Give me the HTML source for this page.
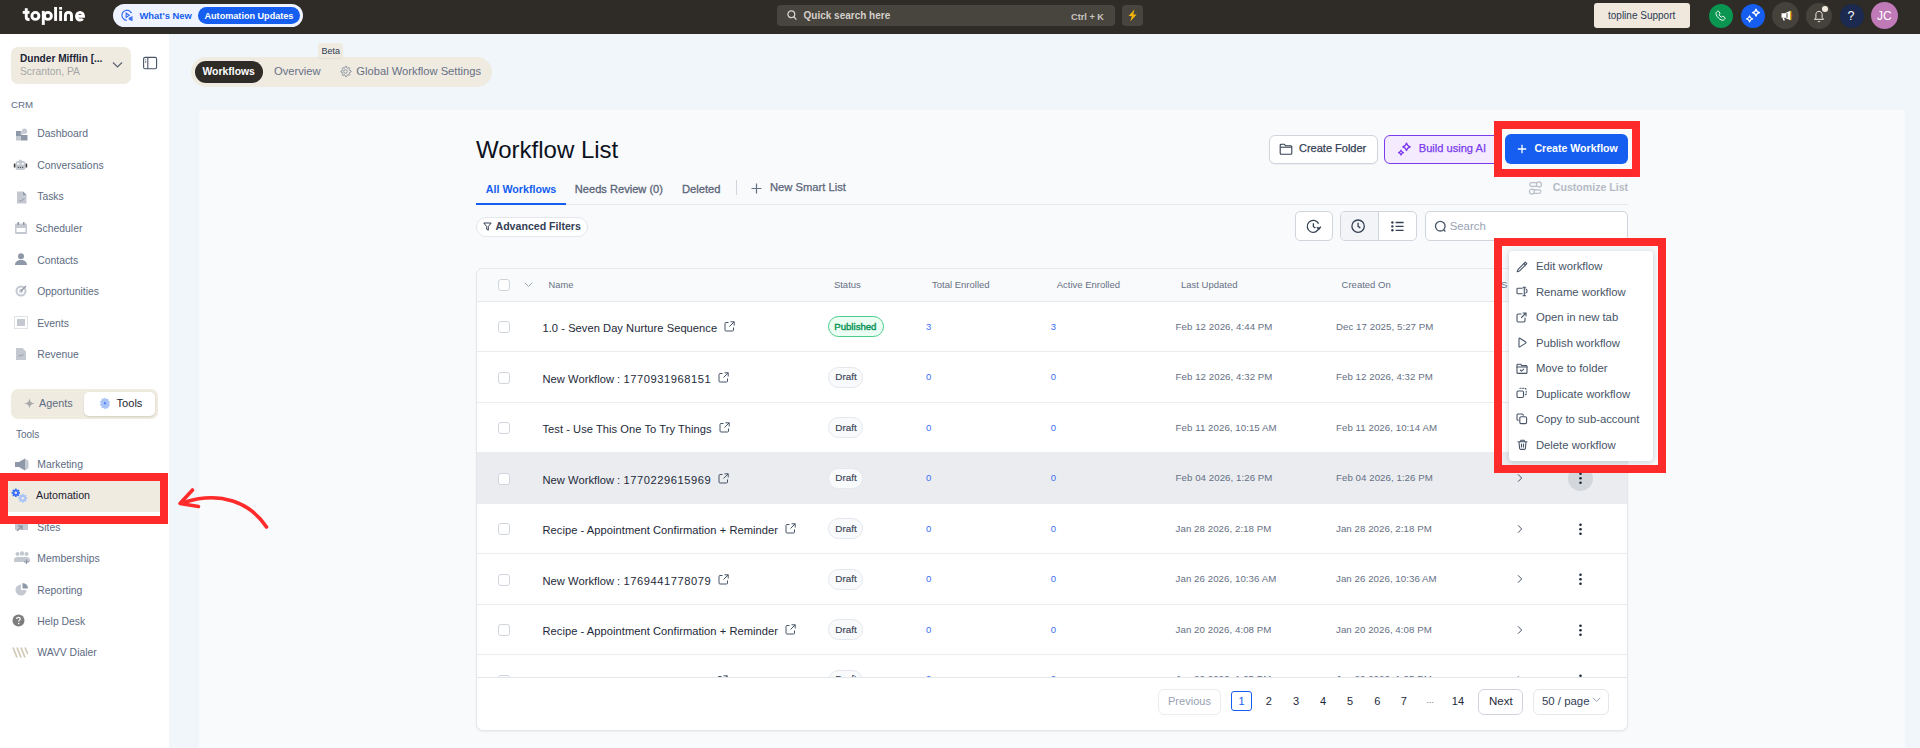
<!DOCTYPE html>
<html><head><meta charset="utf-8">
<style>
*{box-sizing:border-box;margin:0;padding:0}
html,body{width:1920px;height:748px;overflow:hidden;font-family:"Liberation Sans",sans-serif;background:#f0f6fa;position:relative}
.a{position:absolute;white-space:nowrap}
</style></head><body>
<div class="a" style="left:0px;top:0px;width:1920px;height:34px;background:#2f2b26"></div>
<div class="a" style="left:0px;top:34px;width:169px;height:714px;background:#fff"></div>
<div class="a" style="left:199px;top:110px;width:1706px;height:638px;background:#f8fafc"></div>
<svg class="a" style="left:20px;top:4px;" width="70" height="24" viewBox="0 0 70 24" fill="none"><g stroke="#fff" stroke-width="2.9" stroke-linecap="butt">
<path d="M6.25 4.2V13c0 1.6.9 2.45 2.4 2.45h.9"/><path d="M2.7 8.35h6.8"/>
<circle cx="15.4" cy="11.9" r="3.5"/>
<path d="M23.3 6.9v14"/><circle cx="27.9" cy="11.9" r="3.5"/>
<path d="M35.6 3v13.9"/><path d="M40.6 6.9v10"/>
<path d="M45.4 16.9v-5.4c0-1.9 1.4-3.15 3.05-3.15s3.05 1.25 3.05 3.15v5.4"/>
<path d="M56.5 12.2h7c0-2.1-1.5-3.85-3.5-3.85s-3.5 1.75-3.5 3.85 1.5 3.85 3.5 3.85c1.1 0 2.1-.45 2.75-1.2"/>
</g><rect x="39.15" y="3" width="2.9" height="2.6" fill="#fff"/></svg>
<div class="a" style="left:113px;top:4px;width:190px;height:23px;background:#eef3ff;border-radius:12px"></div>
<div class="a" style="left:198px;top:7px;width:101.5px;height:17px;background:#155eef;border-radius:9px"></div>
<svg class="a" style="left:121px;top:9px;" width="13" height="13" viewBox="0 0 13 13" fill="none"><g stroke="#3a6ff7" stroke-width="1.2" fill="none"><path d="M10.5 4.2A5 5 0 1 0 5.8 11.3" stroke-dasharray="2.2 0"/><path d="M5.2 4.2v4.2l3-2.1z"/><path d="M8.3 9.2l2.6-1.2v3.2l-2.6-1.2z" fill="#3a6ff7"/></g></svg>
<div class="a " style="left:139.5px;top:10.00px;font-size:9.4px;line-height:12px;color:#155eef;font-weight:700;">What's New</div>
<div class="a " style="left:204.5px;top:10.00px;font-size:9.1px;line-height:12px;color:#fff;font-weight:700;">Automation Updates</div>
<div class="a" style="left:777px;top:5px;width:338px;height:21px;background:#48443e;border-radius:4px"></div>
<svg class="a" style="left:787px;top:10px;" width="10" height="11" viewBox="0 0 10 11" fill="none"><circle cx="4.3" cy="4.3" r="3.4" stroke="#d6d3ce" stroke-width="1.3"/><path d="M6.8 6.8l2.6 2.8" stroke="#d6d3ce" stroke-width="1.3"/></svg>
<div class="a " style="left:803.5px;top:9.00px;font-size:10px;line-height:13px;color:#d4d0ca;font-weight:700;">Quick search here</div>
<div class="a " style="left:1071px;top:11.00px;font-size:9.2px;line-height:12px;color:#c9c5bf;font-weight:700;">Ctrl + K</div>
<div class="a" style="left:1122px;top:5px;width:21px;height:21px;background:#48443e;border-radius:4px"></div>
<svg class="a" style="left:1127px;top:9px;" width="11" height="13" viewBox="0 0 11 13" fill="none"><path d="M7.5 0.5L1.5 7h3.3L3.3 12.5 9.6 5.6H6.3z" fill="#f5b70a"/></svg>
<div class="a" style="left:1594px;top:3px;width:96px;height:25px;background:#f0e8dc;border-radius:3px"></div>
<div class="a " style="left:1608px;top:9.00px;font-size:10px;line-height:13px;color:#2c3a55;font-weight:400;">topline Support</div>
<div class="a" style="left:1709.0px;top:3.5px;width:24px;height:24px;background:#0a9551;border-radius:50%"></div>
<svg class="a" style="left:1715px;top:10px;" width="12" height="12" viewBox="0 0 12 12" fill="none"><path d="M2.6 1.2c.35-.25.8-.2 1.05.1l1.2 1.65c.25.35.2.75-.1 1l-.75.65c.5 1.15 1.4 2.1 2.55 2.65l.65-.75c.25-.3.7-.35 1-.1l1.65 1.2c.35.25.35.75.1 1.05l-.85.95C8.6 10.4 7.4 10.5 6.1 9.85 4 8.75 2.4 7.2 1.4 5.1.8 3.9.9 2.7 1.6 2z" stroke="#fff" stroke-width="1"/></svg>
<div class="a" style="left:1741.0px;top:3.5px;width:24px;height:24px;background:#155eef;border-radius:50%"></div>
<svg class="a" style="left:1744px;top:7px;" width="18" height="18" viewBox="0 0 18 18" fill="none"><g fill="none" stroke="#fff" stroke-width="1.3" stroke-linejoin="round"><path d="M12 2.2c.4 2.2 1.3 3.1 3.5 3.5-2.2.4-3.1 1.3-3.5 3.5-.4-2.2-1.3-3.1-3.5-3.5 2.2-.4 3.1-1.3 3.5-3.5z"/><path d="M5.6 8.8c.35 1.9 1.1 2.65 3 3-1.9.35-2.65 1.1-3 3-.35-1.9-1.1-2.65-3-3 1.9-.35 2.65-1.1 3-3z"/></g></svg>
<div class="a" style="left:1772.0px;top:2.0px;width:27px;height:27px;background:#45413b;border-radius:50%"></div>
<svg class="a" style="left:1780px;top:10px;" width="13" height="11" viewBox="0 0 13 11" fill="none"><path d="M1.5 3.2h3.3L10.5 0.8v9.4L4.8 7.8H1.5z" fill="#fff"/><path d="M2.5 7.8l.8 2.6h1.6l-.8-2.6z" fill="#fff"/><path d="M10.8 1v9" stroke="#f5b70a" stroke-width="1.2"/><path d="M11.8 4.3v2.4" stroke="#e0453a" stroke-width="1"/><path d="M7 3.2v4.6" stroke="#45413b" stroke-width="1"/></svg>
<div class="a" style="left:1806.0px;top:2.5px;width:26px;height:26px;background:#45413b;border-radius:50%"></div>
<svg class="a" style="left:1813px;top:9.5px;" width="12" height="13" viewBox="0 0 12 13" fill="none"><path d="M6 1.3c-1.9 0-3.1 1.5-3.1 3.3v2.9L1.5 9.3h9L9.1 7.5V4.6C9.1 2.8 7.9 1.3 6 1.3z" stroke="#f2efe9" stroke-width="1"/><path d="M4.9 11a1.15 1.15 0 0 0 2.2 0" stroke="#f2efe9" stroke-width="1"/></svg>
<div class="a" style="left:1822.25px;top:6.25px;width:5.5px;height:5.5px;background:#f0e8dc;border-radius:50%"></div>
<div class="a" style="left:1840.0px;top:3.5px;width:24px;height:24px;background:#1b2a4e;border-radius:50%"></div>
<div class="a " style="left:1847.5px;top:8.00px;font-size:12.5px;line-height:16px;color:#fff;font-weight:400;">?</div>
<div class="a" style="left:1871.0px;top:2.0px;width:27px;height:27px;background:#c07ab8;border-radius:50%"></div>
<div class="a " style="left:1877px;top:8.00px;font-size:12px;line-height:16px;color:#fff;font-weight:400;">JC</div>
<div class="a" style="left:11px;top:47px;width:120px;height:37px;background:#f0ebe0;border-radius:7px"></div>
<div class="a " style="left:20px;top:52.30px;font-size:10.1px;line-height:13px;color:#1a2338;font-weight:700;">Dunder Mifflin [...</div>
<div class="a " style="left:20px;top:65.00px;font-size:10.3px;line-height:13px;color:#a6a6a6;font-weight:400;">Scranton, PA</div>
<svg class="a" style="left:112px;top:61px;" width="11" height="8" viewBox="0 0 11 8" fill="none"><path d="M1 1.5l4.5 4.5L10 1.5" stroke="#556070" stroke-width="1.1"/></svg>
<svg class="a" style="left:142px;top:56px;" width="16" height="14" viewBox="0 0 16 14" fill="none"><rect x="1.6" y="1.4" width="13" height="11.4" rx="1.5" stroke="#4a5468" stroke-width="1.1"/><path d="M5.8 1.4v11.4" stroke="#4a5468" stroke-width="1.1"/><path d="M3.7 3.3v1M3.7 5.2v1.6" stroke="#4a5468" stroke-width="0.9"/></svg>
<div class="a " style="left:11px;top:98.00px;font-size:9.7px;line-height:13px;color:#5d6b82;font-weight:400;">CRM</div>
<div class="a " style="left:37.2px;top:127.00px;font-size:10.4px;line-height:14px;color:#5d6b82;font-weight:400;">Dashboard</div>
<div class="a " style="left:37.2px;top:159.00px;font-size:10.4px;line-height:14px;color:#5d6b82;font-weight:400;">Conversations</div>
<div class="a " style="left:37.2px;top:190.00px;font-size:10.4px;line-height:14px;color:#5d6b82;font-weight:400;">Tasks</div>
<div class="a " style="left:35.6px;top:222.00px;font-size:10.4px;line-height:14px;color:#5d6b82;font-weight:400;">Scheduler</div>
<div class="a " style="left:37.2px;top:254.00px;font-size:10.4px;line-height:14px;color:#5d6b82;font-weight:400;">Contacts</div>
<div class="a " style="left:37.2px;top:285.00px;font-size:10.4px;line-height:14px;color:#5d6b82;font-weight:400;">Opportunities</div>
<div class="a " style="left:37.2px;top:317.00px;font-size:10.4px;line-height:14px;color:#5d6b82;font-weight:400;">Events</div>
<div class="a " style="left:37.2px;top:348.00px;font-size:10.4px;line-height:14px;color:#5d6b82;font-weight:400;">Revenue</div>
<svg class="a" style="left:15px;top:128px;" width="13" height="13" viewBox="0 0 13 13" fill="none"><rect x="1" y="3" width="5.5" height="5" fill="#8f98a8"/><circle cx="9.5" cy="3.2" r="2.6" fill="#c3c8d1"/><rect x="1" y="8" width="5" height="4.5" fill="#c3c8d1"/><path d="M6 7h6.5v5.5H6z" fill="#8f98a8"/><circle cx="6.5" cy="5.5" r="1.3" fill="#c3c8d1"/></svg>
<svg class="a" style="left:13px;top:159px;" width="15" height="12" viewBox="0 0 15 12" fill="none"><rect x="2.5" y="2" width="10" height="9" rx="2.5" fill="#c3c8d1"/><rect x="6" y="0.8" width="3" height="1.5" fill="#c3c8d1"/><rect x="4.3" y="4" width="2" height="1.6" fill="#fff"/><rect x="8.7" y="4" width="2" height="1.6" fill="#fff"/><rect x="0.8" y="4.5" width="1.6" height="4" rx=".6" fill="#3d3d3d"/><rect x="12.6" y="4.5" width="1.6" height="4" rx=".6" fill="#3d3d3d"/><path d="M4.8 8.3h1.2M6.9 8.3h1.2M9 8.3h1.2" stroke="#3d3d3d" stroke-width="1"/></svg>
<svg class="a" style="left:17px;top:191px;" width="10" height="13" viewBox="0 0 10 13" fill="none"><path d="M0 0.5h6L9.5 4v8.5H0z" fill="#c3c8d1"/><path d="M6 0.5V4h3.5z" fill="#8f98a8"/><path d="M2.3 9l1.6 1.6L7.2 7.3" stroke="#8f98a8" stroke-width="1"/></svg>
<svg class="a" style="left:15px;top:222px;" width="12" height="12" viewBox="0 0 12 12" fill="none"><rect x="0" y="1.5" width="12" height="10.5" rx="1" fill="#c3c8d1"/><rect x="1.5" y="6" width="9" height="4" fill="#fff"/><rect x="2.5" y="0" width="1.5" height="3" fill="#8f98a8"/><rect x="8" y="0" width="1.5" height="3" fill="#8f98a8"/></svg>
<svg class="a" style="left:15px;top:253px;" width="12" height="12" viewBox="0 0 12 12" fill="none"><circle cx="6" cy="3.3" r="3" fill="#8f98a8"/><path d="M0 12c0-3.3 2.7-5 6-5s6 1.7 6 5z" fill="#8f98a8"/></svg>
<svg class="a" style="left:15px;top:285px;" width="12" height="12" viewBox="0 0 12 12" fill="none"><circle cx="6" cy="6" r="5.5" fill="#c3c8d1"/><circle cx="6" cy="6" r="3.5" fill="#fff"/><circle cx="6" cy="6" r="2" fill="#c3c8d1"/><path d="M6 6l5-5" stroke="#8f98a8" stroke-width="1.3"/></svg>
<svg class="a" style="left:14px;top:316px;" width="14" height="13" viewBox="0 0 14 13" fill="none"><rect x="0.5" y="0.5" width="13" height="12" fill="none" stroke="#e0e3e8" stroke-width="1"/><rect x="3" y="3" width="8" height="7" fill="#c3c8d1"/></svg>
<svg class="a" style="left:16px;top:348px;" width="10" height="12" viewBox="0 0 10 12" fill="none"><path d="M0 0h6.5L10 3.5V12H0z" fill="#c3c8d1"/><path d="M2.5 8.5l1.5-1.5 1.5 1 2-2" stroke="#8f98a8" stroke-width="0.9"/></svg>
<div class="a" style="left:11px;top:389px;width:147px;height:30px;background:#f0ebe0;border-radius:7px"></div>
<div class="a" style="left:84px;top:392px;width:71px;height:24px;background:#fff;border-radius:5px;box-shadow:0 1px 2px rgba(0,0,0,.12)"></div>
<svg class="a" style="left:24px;top:398px;" width="11" height="11" viewBox="0 0 11 11" fill="none"><path d="M5.5 0C6 3.8 7.2 5 11 5.5 7.2 6 6 7.2 5.5 11 5 7.2 3.8 6 0 5.5 3.8 5 5 3.8 5.5 0z" fill="#a9a9a9"/></svg>
<div class="a " style="left:39px;top:396.00px;font-size:10.8px;line-height:14px;color:#5d6b82;font-weight:400;">Agents</div>
<svg class="a" style="left:99px;top:397px;" width="12" height="12" viewBox="0 0 12 12" fill="none"><path d="M6 0.5l1.2 1.6 2-.3.3 2 1.6 1.2-1 1.7 1 1.7-1.6 1.2-.3 2-2-.3L6 12.5 4.8 10.9l-2 .3-.3-2L.9 8l1-1.7-1-1.7 1.6-1.2.3-2 2 .3z" fill="#a9c3f7"/><circle cx="6" cy="6.2" r="1" fill="#3a6ff7"/></svg>
<div class="a " style="left:116.5px;top:396.00px;font-size:11.1px;line-height:14px;color:#1d2433;font-weight:400;">Tools</div>
<div class="a " style="left:16px;top:428.00px;font-size:10px;line-height:13px;color:#5d6b82;font-weight:400;">Tools</div>
<div class="a" style="left:0px;top:481px;width:160px;height:31px;background:#f0ebe0"></div>
<div class="a " style="left:37.3px;top:458.00px;font-size:10.4px;line-height:14px;color:#5d6b82;font-weight:400;">Marketing</div>
<div class="a " style="left:36px;top:488.00px;font-size:10.7px;line-height:14px;color:#1d2433;font-weight:400;">Automation</div>
<div class="a " style="left:37.3px;top:521.00px;font-size:10.4px;line-height:14px;color:#5d6b82;font-weight:400;">Sites</div>
<div class="a " style="left:37.3px;top:552.00px;font-size:10.4px;line-height:14px;color:#5d6b82;font-weight:400;">Memberships</div>
<div class="a " style="left:37.3px;top:584.00px;font-size:10.4px;line-height:14px;color:#5d6b82;font-weight:400;">Reporting</div>
<div class="a " style="left:37.3px;top:615.00px;font-size:10.4px;line-height:14px;color:#5d6b82;font-weight:400;">Help Desk</div>
<div class="a " style="left:37.3px;top:646.00px;font-size:10.4px;line-height:14px;color:#5d6b82;font-weight:400;">WAVV Dialer</div>
<svg class="a" style="left:15px;top:458px;" width="14" height="13" viewBox="0 0 14 13" fill="none"><path d="M0 4h4l6-3.5v12L4 9H0z" fill="#8f98a8"/><path d="M10 0.5L13.5 3v7L10 12.5z" fill="#c3c8d1"/></svg>
<svg class="a" style="left:11px;top:488px;" width="18" height="16" viewBox="0 0 18 16" fill="none"><g transform="translate(4.8 4.8)"><circle r="3.024" fill="#3a6ff7"/><rect x="-0.924" y="-4.2" width="1.848" height="2.1" fill="#3a6ff7" transform="rotate(0)"/><rect x="-0.924" y="-4.2" width="1.848" height="2.1" fill="#3a6ff7" transform="rotate(45)"/><rect x="-0.924" y="-4.2" width="1.848" height="2.1" fill="#3a6ff7" transform="rotate(90)"/><rect x="-0.924" y="-4.2" width="1.848" height="2.1" fill="#3a6ff7" transform="rotate(135)"/><rect x="-0.924" y="-4.2" width="1.848" height="2.1" fill="#3a6ff7" transform="rotate(180)"/><rect x="-0.924" y="-4.2" width="1.848" height="2.1" fill="#3a6ff7" transform="rotate(225)"/><rect x="-0.924" y="-4.2" width="1.848" height="2.1" fill="#3a6ff7" transform="rotate(270)"/><rect x="-0.924" y="-4.2" width="1.848" height="2.1" fill="#3a6ff7" transform="rotate(315)"/><circle r="1.26" fill="#f0ebe0"/></g><g transform="translate(11.8 10.2)"><circle r="3.168" fill="#a9c3f7"/><rect x="-0.9680000000000001" y="-4.4" width="1.9360000000000002" height="2.2" fill="#a9c3f7" transform="rotate(0)"/><rect x="-0.9680000000000001" y="-4.4" width="1.9360000000000002" height="2.2" fill="#a9c3f7" transform="rotate(45)"/><rect x="-0.9680000000000001" y="-4.4" width="1.9360000000000002" height="2.2" fill="#a9c3f7" transform="rotate(90)"/><rect x="-0.9680000000000001" y="-4.4" width="1.9360000000000002" height="2.2" fill="#a9c3f7" transform="rotate(135)"/><rect x="-0.9680000000000001" y="-4.4" width="1.9360000000000002" height="2.2" fill="#a9c3f7" transform="rotate(180)"/><rect x="-0.9680000000000001" y="-4.4" width="1.9360000000000002" height="2.2" fill="#a9c3f7" transform="rotate(225)"/><rect x="-0.9680000000000001" y="-4.4" width="1.9360000000000002" height="2.2" fill="#a9c3f7" transform="rotate(270)"/><rect x="-0.9680000000000001" y="-4.4" width="1.9360000000000002" height="2.2" fill="#a9c3f7" transform="rotate(315)"/><circle r="1.32" fill="#f0ebe0"/></g></svg>
<svg class="a" style="left:15px;top:520px;" width="13" height="12" viewBox="0 0 13 12" fill="none"><rect x="0" y="2" width="13" height="8" fill="#c3c8d1"/><path d="M2 11l5-5M3 6h4v4" stroke="#8f98a8" stroke-width="1.4"/></svg>
<svg class="a" style="left:14px;top:551px;" width="16" height="13" viewBox="0 0 16 13" fill="none"><circle cx="3.5" cy="3" r="2" fill="#c3c8d1"/><circle cx="8" cy="2.5" r="2.2" fill="#c3c8d1"/><circle cx="12.5" cy="3" r="2" fill="#c3c8d1"/><path d="M0 9c0-2 1.5-3 3.5-3h9c2 0 3.5 1 3.5 3v2H0z" fill="#c3c8d1"/><path d="M12.5 8.5v4.5M10.2 10.8h4.6" stroke="#8f98a8" stroke-width="1.2"/></svg>
<svg class="a" style="left:15px;top:583px;" width="13" height="13" viewBox="0 0 13 13" fill="none"><path d="M6 1.5A5.5 5.5 0 1 0 11.5 7H6z" fill="#c3c8d1"/><path d="M7.5 0v5.5H13A5.5 5.5 0 0 0 7.5 0z" fill="#8f98a8"/></svg>
<svg class="a" style="left:12px;top:614px;" width="13" height="13" viewBox="0 0 13 13" fill="none"><circle cx="6.5" cy="6.5" r="6" fill="#7d7d7d"/><path d="M4.7 5c0-1 .8-1.7 1.8-1.7s1.8.7 1.8 1.6c0 1.2-1.6 1.3-1.6 2.5" stroke="#fff" stroke-width="1.2"/><circle cx="6.7" cy="9.6" r=".8" fill="#fff"/></svg>
<svg class="a" style="left:12px;top:647px;" width="16" height="11" viewBox="0 0 16 11" fill="none"><path d="M1 0.5l4 10M5 0.5l4 10M9 0.5l4 10M13 0.5l3 7" stroke="#d1cbb8" stroke-width="1.8"/></svg>
<div class="a" style="left:0px;top:473px;width:168px;height:51px;border:8px solid #ff2b2b"></div>
<svg class="a" style="left:170px;top:485px;" width="105" height="48" viewBox="0 0 105 48" fill="none"><path d="M96.5 42C80 17 50 6 15 17" stroke="#ff2b2b" stroke-width="3.6" stroke-linecap="round"/><path d="M22.5 5L10 18.5 28.5 21.5" stroke="#ff2b2b" stroke-width="3.6" stroke-linecap="round" stroke-linejoin="round"/></svg>
<div class="a" style="left:191px;top:57px;width:301px;height:30px;background:#f0ebe0;border-radius:15px"></div>
<div class="a" style="left:195px;top:61px;width:68px;height:22px;background:#2f2b26;border-radius:11px"></div>
<div class="a " style="left:202.5px;top:65.00px;font-size:10.4px;line-height:14px;color:#fff;font-weight:700;">Workflows</div>
<div class="a " style="left:274px;top:64.00px;font-size:11.2px;line-height:15px;color:#667085;font-weight:400;">Overview</div>
<svg class="a" style="left:339px;top:65px;" width="13" height="13" viewBox="0 0 13 13" fill="none"><path d="M6.5 1.2l1 .2.3 1.3 1 .5 1.2-.6.8.7-.6 1.2.5 1 1.3.3.1 1.1-1.3.4-.4 1 .6 1.2-.7.8-1.2-.6-1 .5-.4 1.3-1.1.1-.4-1.3-1-.4-1.2.6-.8-.7.6-1.2-.5-1-1.3-.4V6l1.3-.4.4-1-.6-1.2.7-.8 1.2.6 1-.5.4-1.3z" stroke="#8c94a3" stroke-width="1"/><circle cx="6.5" cy="6.5" r="1.8" stroke="#8c94a3" stroke-width="1"/></svg>
<div class="a " style="left:356.3px;top:64.00px;font-size:11.2px;line-height:15px;color:#667085;font-weight:400;">Global Workflow Settings</div>
<div class="a" style="left:318px;top:43px;width:25px;height:15px;background:#f0ebe0;border-radius:3px;box-shadow:0 1px 1px rgba(0,0,0,.06)"></div>
<div class="a " style="left:321.5px;top:45.00px;font-size:9px;line-height:12px;color:#2c3a55;font-weight:400;">Beta</div>
<div class="a " style="left:476px;top:134.00px;font-size:24px;line-height:31px;color:#0c111d;font-weight:400;">Workflow List</div>
<div class="a " style="left:485.8px;top:182.00px;font-size:10.7px;line-height:14px;color:#155eef;font-weight:700;">All Workflows</div>
<div class="a " style="left:574.8px;top:182.00px;font-size:11.1px;line-height:14px;color:#5b6578;font-weight:400;-webkit-text-stroke:0.3px #5b6578">Needs Review (0)</div>
<div class="a " style="left:682px;top:182.00px;font-size:11.2px;line-height:15px;color:#5b6578;font-weight:400;-webkit-text-stroke:0.3px #5b6578">Deleted</div>
<div class="a" style="left:736px;top:180px;width:1px;height:15px;background:#d0d5dd"></div>
<svg class="a" style="left:751px;top:183px;" width="11" height="11" viewBox="0 0 11 11" fill="none"><path d="M5.5 0.5v10M0.5 5.5h10" stroke="#667085" stroke-width="1.2"/></svg>
<div class="a " style="left:770px;top:180.00px;font-size:11.2px;line-height:15px;color:#5b6578;font-weight:400;-webkit-text-stroke:0.25px #5b6578">New Smart List</div>
<div class="a" style="left:476px;top:203.5px;width:1152px;height:1px;background:#e4e7ec"></div>
<div class="a" style="left:476px;top:202.5px;width:90px;height:2px;background:#155eef"></div>
<div class="a" style="left:476px;top:216.5px;width:112px;height:20px;background:#fff;border:1px solid #e4e7ec;border-radius:10px"></div>
<svg class="a" style="left:483px;top:222px;" width="9" height="9" viewBox="0 0 9 9" fill="none"><path d="M0.8 1h7.4L5.3 4.6v3.6l-1.6-.9V4.6z" stroke="#344054" stroke-width="1"/></svg>
<div class="a " style="left:495.5px;top:219.00px;font-size:10.6px;line-height:14px;color:#344054;font-weight:700;">Advanced Filters</div>
<div class="a" style="left:1268.5px;top:134.5px;width:109px;height:29px;background:#fff;border:1px solid #d0d5dd;border-radius:6px;box-shadow:0 1px 1px rgba(16,24,40,.05)"></div>
<svg class="a" style="left:1279px;top:143px;" width="14" height="12" viewBox="0 0 14 12" fill="none"><path d="M1.2 2.2c0-.6.4-1 1-1h3l1.3 1.5h5.3c.6 0 1 .4 1 1v6.6c0 .6-.4 1-1 1H2.2c-.6 0-1-.4-1-1z" stroke="#344054" stroke-width="1.1"/><path d="M1.2 4.2h11.6" stroke="#344054" stroke-width="1.1"/></svg>
<div class="a " style="left:1299px;top:141.00px;font-size:11px;line-height:14px;color:#344054;font-weight:400;-webkit-text-stroke:0.25px #344054">Create Folder</div>
<div class="a" style="left:1384px;top:134.5px;width:116px;height:29px;background:#f4ebff;border:1px solid #7a3aed;border-radius:6px"></div>
<svg class="a" style="left:1397px;top:142px;" width="15" height="15" viewBox="0 0 15 15" fill="none"><path d="M9.5 1c.5 2.3 1.5 3.3 3.8 3.8-2.3.5-3.3 1.5-3.8 3.8-.5-2.3-1.5-3.3-3.8-3.8C8 4.3 9 3.3 9.5 1z" stroke="#7a3aed" stroke-width="1.2" stroke-linejoin="round"/><path d="M4 8.2c.3 1.5 1 2.2 2.5 2.5-1.5.3-2.2 1-2.5 2.5-.3-1.5-1-2.2-2.5-2.5 1.5-.3 2.2-1 2.5-2.5z" stroke="#7a3aed" stroke-width="1.2" stroke-linejoin="round"/></svg>
<div class="a " style="left:1418.75px;top:141.00px;font-size:11.1px;line-height:14px;color:#7a3aed;font-weight:400;-webkit-text-stroke:0.25px #7a3aed">Build using AI</div>
<div class="a" style="left:1505px;top:134px;width:123px;height:30px;background:#155eef;border-radius:6px"></div>
<svg class="a" style="left:1517px;top:144px;" width="10" height="10" viewBox="0 0 10 10" fill="none"><path d="M5 0.8v8.4M0.8 5h8.4" stroke="#fff" stroke-width="1.3"/></svg>
<div class="a " style="left:1534.4px;top:141.00px;font-size:10.6px;line-height:14px;color:#fff;font-weight:700;">Create Workflow</div>
<div class="a" style="left:1494px;top:121px;width:146px;height:56px;border:8px solid #ff2b2b"></div>
<svg class="a" style="left:1528px;top:181px;" width="15" height="14" viewBox="0 0 15 14" fill="none"><rect x="1.8" y="1.7" width="11" height="3.6" rx="1.8" stroke="#b9bfc9" stroke-width="1.2"/><rect x="1.8" y="8.8" width="11" height="3.6" rx="1.8" stroke="#b9bfc9" stroke-width="1.2"/><circle cx="10.9" cy="3.4" r="2.5" stroke="#b9bfc9" stroke-width="1.2" fill="#f8fafc"/><circle cx="3.9" cy="10.6" r="2.5" stroke="#b9bfc9" stroke-width="1.2" fill="#f8fafc"/></svg>
<div class="a " style="left:1552.8px;top:180.00px;font-size:10.6px;line-height:14px;color:#b5bbc5;font-weight:700;">Customize List</div>
<div class="a" style="left:1294.5px;top:211px;width:38px;height:29.5px;background:#fff;border:1px solid #d0d5dd;border-radius:5px"></div>
<svg class="a" style="left:1306px;top:219px;" width="16" height="15" viewBox="0 0 16 15" fill="none"><path d="M13.2 8.2A6 6 0 1 1 12.6 4.6" stroke="#344054" stroke-width="1.3"/><path d="M7.4 4.2v3.5l2 1.2" stroke="#344054" stroke-width="1.3"/><path d="M10.8 8.2l2.3 1.8 1.7-2.4" stroke="#344054" stroke-width="1.3"/></svg>
<div class="a" style="left:1339.5px;top:211px;width:77px;height:29.5px;background:#fff;border:1px solid #d0d5dd;border-radius:5px;overflow:hidden"></div>
<div class="a" style="left:1340.5px;top:212px;width:37px;height:27.5px;background:#f2f4f7;border-radius:4px 0 0 4px"></div>
<div class="a" style="left:1377.5px;top:212px;width:1px;height:28px;background:#d0d5dd"></div>
<svg class="a" style="left:1351px;top:219px;" width="15" height="15" viewBox="0 0 15 15" fill="none"><circle cx="7.1" cy="7.2" r="6.2" stroke="#344054" stroke-width="1.3"/><path d="M7.1 3.8v3.6l2.2 1.5" stroke="#344054" stroke-width="1.3"/></svg>
<svg class="a" style="left:1391px;top:221px;" width="14" height="11" viewBox="0 0 14 11" fill="none"><circle cx="1.4" cy="1.5" r="1.2" fill="#344054"/><circle cx="1.4" cy="5.4" r="1.2" fill="#344054"/><circle cx="1.4" cy="9.3" r="1.2" fill="#344054"/><path d="M4.6 1.5h8M4.6 5.4h8M4.6 9.3h8" stroke="#344054" stroke-width="1.3"/></svg>
<div class="a" style="left:1425px;top:211px;width:203px;height:29.5px;background:#fff;border:1px solid #d0d5dd;border-radius:5px"></div>
<svg class="a" style="left:1434px;top:220px;" width="13" height="13" viewBox="0 0 13 13" fill="none"><circle cx="6.3" cy="6.2" r="4.8" stroke="#475467" stroke-width="1.3"/><path d="M9.6 9.6l1.8 1.9" stroke="#475467" stroke-width="1.3"/></svg>
<div class="a " style="left:1449.7px;top:219.00px;font-size:11.4px;line-height:15px;color:#98a2b3;font-weight:400;">Search</div>
<div class="a" style="left:476px;top:268px;width:1152px;height:463px;background:#fff;border:1px solid #e4e7ec;border-radius:7px;box-shadow:0 1px 2px rgba(16,24,40,.06)"></div>
<div class="a" style="left:477px;top:269px;width:1150px;height:33px;background:#f9fafb;border-radius:6px 6px 0 0;border-bottom:1px solid #e4e7ec"></div>
<div class="a" style="left:498px;top:279px;width:12px;height:12px;background:#fff;border:1px solid #d0d5dd;border-radius:3px"></div>
<svg class="a" style="left:524px;top:282px;" width="9" height="6" viewBox="0 0 9 6" fill="none"><path d="M0.8 0.8L4.5 4.5 8.2 0.8" stroke="#98a2b3" stroke-width="1"/></svg>
<div class="a " style="left:548.6px;top:279.00px;font-size:9.3px;line-height:12px;color:#667085;font-weight:400;">Name</div>
<div class="a " style="left:833.9px;top:279.00px;font-size:9.5px;line-height:12px;color:#667085;font-weight:400;">Status</div>
<div class="a " style="left:932px;top:279.00px;font-size:9.5px;line-height:12px;color:#667085;font-weight:400;">Total Enrolled</div>
<div class="a " style="left:1056.7px;top:279.00px;font-size:9.5px;line-height:12px;color:#667085;font-weight:400;">Active Enrolled</div>
<div class="a " style="left:1181px;top:279.00px;font-size:9.5px;line-height:12px;color:#667085;font-weight:400;">Last Updated</div>
<div class="a " style="left:1341.6px;top:279.00px;font-size:9.5px;line-height:12px;color:#667085;font-weight:400;">Created On</div>
<div class="a " style="left:1501px;top:279.00px;font-size:9.5px;line-height:12px;color:#667085;font-weight:400;">S</div>
<div class="a" style="left:477px;top:302px;width:1150px;height:375px;overflow:hidden">
<div class="a" style="left:0px;top:49px;width:1150px;height:1px;background:#eaecf0"></div>
<div class="a" style="left:21px;top:19.0px;width:12px;height:12px;background:#fff;border:1px solid #d0d5dd;border-radius:3px"></div>
<div class="a" style="left:65.5px;top:19.18px;font-size:11.15px;line-height:14.3px;color:#1d2939;letter-spacing:0.04px">1.0 - Seven Day Nurture Sequence<svg style="display:inline-block;vertical-align:0;margin-left:7px" width="11" height="11" viewBox="0 0 11 11" fill="none"><path d="M4.5 1.5H2A1 1 0 0 0 1 2.5V9a1 1 0 0 0 1 1h6.5a1 1 0 0 0 1-1V6.5" stroke="#475467" stroke-width="1"/><path d="M6.5 0.8h3.7v3.7M10.2 0.8L5.5 5.5" stroke="#475467" stroke-width="1"/></svg></div>
<div class="a" style="left:351px;top:14.300000000000011px;width:56px;height:21px;background:#ecfdf3;border:1.3px solid #47cd89;border-radius:11px"></div>
<div class="a " style="left:357.29999999999995px;top:19.00px;font-size:9.6px;line-height:12px;color:#079455;font-weight:400;-webkit-text-stroke:0.4px #079455">Published</div>
<div class="a " style="left:449px;top:19.00px;font-size:9.5px;line-height:12px;color:#3b6ff5;font-weight:400;">3</div>
<div class="a " style="left:573.8px;top:19.00px;font-size:9.5px;line-height:12px;color:#3b6ff5;font-weight:400;">3</div>
<div class="a " style="left:698.5999999999999px;top:18.00px;font-size:9.7px;line-height:13px;color:#667085;font-weight:400;letter-spacing:0.05px">Feb 12 2026, 4:44 PM</div>
<div class="a " style="left:859px;top:18.00px;font-size:9.7px;line-height:13px;color:#667085;font-weight:400;letter-spacing:0.05px">Dec 17 2025, 5:27 PM</div>
<svg class="a" style="left:1039px;top:19.5px;" width="8" height="10" viewBox="0 0 8 10" fill="none"><path d="M2 1.3l3.7 3.7L2 8.7" stroke="#475467" stroke-width="1"/></svg>
<svg class="a" style="left:1102px;top:18.80000000000001px;" width="3" height="13" viewBox="0 0 3 13" fill="none"><circle cx="1.5" cy="1.7" r="1.3" fill="#1d2939"/><circle cx="1.5" cy="6.2" r="1.3" fill="#1d2939"/><circle cx="1.5" cy="10.7" r="1.3" fill="#1d2939"/></svg>
<div class="a" style="left:0px;top:100px;width:1150px;height:1px;background:#eaecf0"></div>
<div class="a" style="left:21px;top:69.5px;width:12px;height:12px;background:#fff;border:1px solid #d0d5dd;border-radius:3px"></div>
<div class="a" style="left:65.5px;top:69.68px;font-size:11.15px;line-height:14.3px;color:#1d2939;letter-spacing:0.04px">New Workflow : <span style="letter-spacing:0.56px">1770931968151</span><svg style="display:inline-block;vertical-align:0;margin-left:7px" width="11" height="11" viewBox="0 0 11 11" fill="none"><path d="M4.5 1.5H2A1 1 0 0 0 1 2.5V9a1 1 0 0 0 1 1h6.5a1 1 0 0 0 1-1V6.5" stroke="#475467" stroke-width="1"/><path d="M6.5 0.8h3.7v3.7M10.2 0.8L5.5 5.5" stroke="#475467" stroke-width="1"/></svg></div>
<div class="a" style="left:351px;top:64.80000000000001px;width:34.5px;height:21px;background:#f9fafb;border:1px solid #e4e7ec;border-radius:11px"></div>
<div class="a " style="left:358.29999999999995px;top:68.00px;font-size:9.9px;line-height:13px;color:#344054;font-weight:400;-webkit-text-stroke:0.12px #344054">Draft</div>
<div class="a " style="left:449px;top:69.00px;font-size:9.5px;line-height:12px;color:#3b6ff5;font-weight:400;">0</div>
<div class="a " style="left:573.8px;top:69.00px;font-size:9.5px;line-height:12px;color:#3b6ff5;font-weight:400;">0</div>
<div class="a " style="left:698.5999999999999px;top:68.00px;font-size:9.7px;line-height:13px;color:#667085;font-weight:400;letter-spacing:0.05px">Feb 12 2026, 4:32 PM</div>
<div class="a " style="left:859px;top:68.00px;font-size:9.7px;line-height:13px;color:#667085;font-weight:400;letter-spacing:0.05px">Feb 12 2026, 4:32 PM</div>
<svg class="a" style="left:1039px;top:70.0px;" width="8" height="10" viewBox="0 0 8 10" fill="none"><path d="M2 1.3l3.7 3.7L2 8.7" stroke="#475467" stroke-width="1"/></svg>
<svg class="a" style="left:1102px;top:69.30000000000001px;" width="3" height="13" viewBox="0 0 3 13" fill="none"><circle cx="1.5" cy="1.7" r="1.3" fill="#1d2939"/><circle cx="1.5" cy="6.2" r="1.3" fill="#1d2939"/><circle cx="1.5" cy="10.7" r="1.3" fill="#1d2939"/></svg>
<div class="a" style="left:0px;top:150px;width:1150px;height:1px;background:#eaecf0"></div>
<div class="a" style="left:21px;top:120.0px;width:12px;height:12px;background:#fff;border:1px solid #d0d5dd;border-radius:3px"></div>
<div class="a" style="left:65.5px;top:120.18px;font-size:11.15px;line-height:14.3px;color:#1d2939;letter-spacing:0.04px">Test - Use This One To Try Things<svg style="display:inline-block;vertical-align:0;margin-left:7px" width="11" height="11" viewBox="0 0 11 11" fill="none"><path d="M4.5 1.5H2A1 1 0 0 0 1 2.5V9a1 1 0 0 0 1 1h6.5a1 1 0 0 0 1-1V6.5" stroke="#475467" stroke-width="1"/><path d="M6.5 0.8h3.7v3.7M10.2 0.8L5.5 5.5" stroke="#475467" stroke-width="1"/></svg></div>
<div class="a" style="left:351px;top:115.30000000000001px;width:34.5px;height:21px;background:#f9fafb;border:1px solid #e4e7ec;border-radius:11px"></div>
<div class="a " style="left:358.29999999999995px;top:119.00px;font-size:9.9px;line-height:13px;color:#344054;font-weight:400;-webkit-text-stroke:0.12px #344054">Draft</div>
<div class="a " style="left:449px;top:120.00px;font-size:9.5px;line-height:12px;color:#3b6ff5;font-weight:400;">0</div>
<div class="a " style="left:573.8px;top:120.00px;font-size:9.5px;line-height:12px;color:#3b6ff5;font-weight:400;">0</div>
<div class="a " style="left:698.5999999999999px;top:119.00px;font-size:9.7px;line-height:13px;color:#667085;font-weight:400;letter-spacing:0.05px">Feb 11 2026, 10:15 AM</div>
<div class="a " style="left:859px;top:119.00px;font-size:9.7px;line-height:13px;color:#667085;font-weight:400;letter-spacing:0.05px">Feb 11 2026, 10:14 AM</div>
<svg class="a" style="left:1039px;top:120.5px;" width="8" height="10" viewBox="0 0 8 10" fill="none"><path d="M2 1.3l3.7 3.7L2 8.7" stroke="#475467" stroke-width="1"/></svg>
<svg class="a" style="left:1102px;top:119.80000000000001px;" width="3" height="13" viewBox="0 0 3 13" fill="none"><circle cx="1.5" cy="1.7" r="1.3" fill="#1d2939"/><circle cx="1.5" cy="6.2" r="1.3" fill="#1d2939"/><circle cx="1.5" cy="10.7" r="1.3" fill="#1d2939"/></svg>
<div class="a" style="left:0px;top:150px;width:1150px;height:51px;background:#eaecf0"></div>
<div class="a" style="left:0px;top:201px;width:1150px;height:1px;background:#eaecf0"></div>
<div class="a" style="left:21px;top:170.5px;width:12px;height:12px;background:#fff;border:1px solid #d0d5dd;border-radius:3px"></div>
<div class="a" style="left:65.5px;top:170.68px;font-size:11.15px;line-height:14.3px;color:#1d2939;letter-spacing:0.04px">New Workflow : <span style="letter-spacing:0.56px">1770229615969</span><svg style="display:inline-block;vertical-align:0;margin-left:7px" width="11" height="11" viewBox="0 0 11 11" fill="none"><path d="M4.5 1.5H2A1 1 0 0 0 1 2.5V9a1 1 0 0 0 1 1h6.5a1 1 0 0 0 1-1V6.5" stroke="#475467" stroke-width="1"/><path d="M6.5 0.8h3.7v3.7M10.2 0.8L5.5 5.5" stroke="#475467" stroke-width="1"/></svg></div>
<div class="a" style="left:351px;top:165.8px;width:34.5px;height:21px;background:#f9fafb;border:1px solid #e4e7ec;border-radius:11px"></div>
<div class="a " style="left:358.29999999999995px;top:169.00px;font-size:9.9px;line-height:13px;color:#344054;font-weight:400;-webkit-text-stroke:0.12px #344054">Draft</div>
<div class="a " style="left:449px;top:170.00px;font-size:9.5px;line-height:12px;color:#3b6ff5;font-weight:400;">0</div>
<div class="a " style="left:573.8px;top:170.00px;font-size:9.5px;line-height:12px;color:#3b6ff5;font-weight:400;">0</div>
<div class="a " style="left:698.5999999999999px;top:169.00px;font-size:9.7px;line-height:13px;color:#667085;font-weight:400;letter-spacing:0.05px">Feb 04 2026, 1:26 PM</div>
<div class="a " style="left:859px;top:169.00px;font-size:9.7px;line-height:13px;color:#667085;font-weight:400;letter-spacing:0.05px">Feb 04 2026, 1:26 PM</div>
<svg class="a" style="left:1039px;top:171.0px;" width="8" height="10" viewBox="0 0 8 10" fill="none"><path d="M2 1.3l3.7 3.7L2 8.7" stroke="#475467" stroke-width="1"/></svg>
<div class="a" style="left:1091px;top:164.0px;width:25px;height:25px;background:#d3d7dc;border-radius:50%"></div>
<svg class="a" style="left:1102px;top:170.3px;" width="3" height="13" viewBox="0 0 3 13" fill="none"><circle cx="1.5" cy="1.7" r="1.3" fill="#1d2939"/><circle cx="1.5" cy="6.2" r="1.3" fill="#1d2939"/><circle cx="1.5" cy="10.7" r="1.3" fill="#1d2939"/></svg>
<div class="a" style="left:0px;top:251px;width:1150px;height:1px;background:#eaecf0"></div>
<div class="a" style="left:21px;top:221.0px;width:12px;height:12px;background:#fff;border:1px solid #d0d5dd;border-radius:3px"></div>
<div class="a" style="left:65.5px;top:221.18px;font-size:11.15px;line-height:14.3px;color:#1d2939;letter-spacing:0.04px">Recipe - Appointment Confirmation + Reminder<svg style="display:inline-block;vertical-align:0;margin-left:7px" width="11" height="11" viewBox="0 0 11 11" fill="none"><path d="M4.5 1.5H2A1 1 0 0 0 1 2.5V9a1 1 0 0 0 1 1h6.5a1 1 0 0 0 1-1V6.5" stroke="#475467" stroke-width="1"/><path d="M6.5 0.8h3.7v3.7M10.2 0.8L5.5 5.5" stroke="#475467" stroke-width="1"/></svg></div>
<div class="a" style="left:351px;top:216.29999999999995px;width:34.5px;height:21px;background:#f9fafb;border:1px solid #e4e7ec;border-radius:11px"></div>
<div class="a " style="left:358.29999999999995px;top:220.00px;font-size:9.9px;line-height:13px;color:#344054;font-weight:400;-webkit-text-stroke:0.12px #344054">Draft</div>
<div class="a " style="left:449px;top:221.00px;font-size:9.5px;line-height:12px;color:#3b6ff5;font-weight:400;">0</div>
<div class="a " style="left:573.8px;top:221.00px;font-size:9.5px;line-height:12px;color:#3b6ff5;font-weight:400;">0</div>
<div class="a " style="left:698.5999999999999px;top:220.00px;font-size:9.7px;line-height:13px;color:#667085;font-weight:400;letter-spacing:0.05px">Jan 28 2026, 2:18 PM</div>
<div class="a " style="left:859px;top:220.00px;font-size:9.7px;line-height:13px;color:#667085;font-weight:400;letter-spacing:0.05px">Jan 28 2026, 2:18 PM</div>
<svg class="a" style="left:1039px;top:221.5px;" width="8" height="10" viewBox="0 0 8 10" fill="none"><path d="M2 1.3l3.7 3.7L2 8.7" stroke="#475467" stroke-width="1"/></svg>
<svg class="a" style="left:1102px;top:220.79999999999995px;" width="3" height="13" viewBox="0 0 3 13" fill="none"><circle cx="1.5" cy="1.7" r="1.3" fill="#1d2939"/><circle cx="1.5" cy="6.2" r="1.3" fill="#1d2939"/><circle cx="1.5" cy="10.7" r="1.3" fill="#1d2939"/></svg>
<div class="a" style="left:0px;top:302px;width:1150px;height:1px;background:#eaecf0"></div>
<div class="a" style="left:21px;top:271.5px;width:12px;height:12px;background:#fff;border:1px solid #d0d5dd;border-radius:3px"></div>
<div class="a" style="left:65.5px;top:271.68px;font-size:11.15px;line-height:14.3px;color:#1d2939;letter-spacing:0.04px">New Workflow : <span style="letter-spacing:0.56px">1769441778079</span><svg style="display:inline-block;vertical-align:0;margin-left:7px" width="11" height="11" viewBox="0 0 11 11" fill="none"><path d="M4.5 1.5H2A1 1 0 0 0 1 2.5V9a1 1 0 0 0 1 1h6.5a1 1 0 0 0 1-1V6.5" stroke="#475467" stroke-width="1"/><path d="M6.5 0.8h3.7v3.7M10.2 0.8L5.5 5.5" stroke="#475467" stroke-width="1"/></svg></div>
<div class="a" style="left:351px;top:266.79999999999995px;width:34.5px;height:21px;background:#f9fafb;border:1px solid #e4e7ec;border-radius:11px"></div>
<div class="a " style="left:358.29999999999995px;top:270.00px;font-size:9.9px;line-height:13px;color:#344054;font-weight:400;-webkit-text-stroke:0.12px #344054">Draft</div>
<div class="a " style="left:449px;top:271.00px;font-size:9.5px;line-height:12px;color:#3b6ff5;font-weight:400;">0</div>
<div class="a " style="left:573.8px;top:271.00px;font-size:9.5px;line-height:12px;color:#3b6ff5;font-weight:400;">0</div>
<div class="a " style="left:698.5999999999999px;top:270.00px;font-size:9.7px;line-height:13px;color:#667085;font-weight:400;letter-spacing:0.05px">Jan 26 2026, 10:36 AM</div>
<div class="a " style="left:859px;top:270.00px;font-size:9.7px;line-height:13px;color:#667085;font-weight:400;letter-spacing:0.05px">Jan 26 2026, 10:36 AM</div>
<svg class="a" style="left:1039px;top:272.0px;" width="8" height="10" viewBox="0 0 8 10" fill="none"><path d="M2 1.3l3.7 3.7L2 8.7" stroke="#475467" stroke-width="1"/></svg>
<svg class="a" style="left:1102px;top:271.29999999999995px;" width="3" height="13" viewBox="0 0 3 13" fill="none"><circle cx="1.5" cy="1.7" r="1.3" fill="#1d2939"/><circle cx="1.5" cy="6.2" r="1.3" fill="#1d2939"/><circle cx="1.5" cy="10.7" r="1.3" fill="#1d2939"/></svg>
<div class="a" style="left:0px;top:352px;width:1150px;height:1px;background:#eaecf0"></div>
<div class="a" style="left:21px;top:322.0px;width:12px;height:12px;background:#fff;border:1px solid #d0d5dd;border-radius:3px"></div>
<div class="a" style="left:65.5px;top:322.18px;font-size:11.15px;line-height:14.3px;color:#1d2939;letter-spacing:0.04px">Recipe - Appointment Confirmation + Reminder<svg style="display:inline-block;vertical-align:0;margin-left:7px" width="11" height="11" viewBox="0 0 11 11" fill="none"><path d="M4.5 1.5H2A1 1 0 0 0 1 2.5V9a1 1 0 0 0 1 1h6.5a1 1 0 0 0 1-1V6.5" stroke="#475467" stroke-width="1"/><path d="M6.5 0.8h3.7v3.7M10.2 0.8L5.5 5.5" stroke="#475467" stroke-width="1"/></svg></div>
<div class="a" style="left:351px;top:317.29999999999995px;width:34.5px;height:21px;background:#f9fafb;border:1px solid #e4e7ec;border-radius:11px"></div>
<div class="a " style="left:358.29999999999995px;top:321.00px;font-size:9.9px;line-height:13px;color:#344054;font-weight:400;-webkit-text-stroke:0.12px #344054">Draft</div>
<div class="a " style="left:449px;top:322.00px;font-size:9.5px;line-height:12px;color:#3b6ff5;font-weight:400;">0</div>
<div class="a " style="left:573.8px;top:322.00px;font-size:9.5px;line-height:12px;color:#3b6ff5;font-weight:400;">0</div>
<div class="a " style="left:698.5999999999999px;top:321.00px;font-size:9.7px;line-height:13px;color:#667085;font-weight:400;letter-spacing:0.05px">Jan 20 2026, 4:08 PM</div>
<div class="a " style="left:859px;top:321.00px;font-size:9.7px;line-height:13px;color:#667085;font-weight:400;letter-spacing:0.05px">Jan 20 2026, 4:08 PM</div>
<svg class="a" style="left:1039px;top:322.5px;" width="8" height="10" viewBox="0 0 8 10" fill="none"><path d="M2 1.3l3.7 3.7L2 8.7" stroke="#475467" stroke-width="1"/></svg>
<svg class="a" style="left:1102px;top:321.79999999999995px;" width="3" height="13" viewBox="0 0 3 13" fill="none"><circle cx="1.5" cy="1.7" r="1.3" fill="#1d2939"/><circle cx="1.5" cy="6.2" r="1.3" fill="#1d2939"/><circle cx="1.5" cy="10.7" r="1.3" fill="#1d2939"/></svg>
<div class="a" style="left:0px;top:402px;width:1150px;height:1px;background:#eaecf0"></div>
<div class="a" style="left:21px;top:372.5px;width:12px;height:12px;background:#fff;border:1px solid #d0d5dd;border-radius:3px"></div>
<div class="a" style="left:65.5px;top:372.68px;font-size:11.15px;line-height:14.3px;color:#1d2939;letter-spacing:0.04px">New Workflow : <span style="letter-spacing:0.56px">1768942011234</span><svg style="display:inline-block;vertical-align:0;margin-left:7px" width="11" height="11" viewBox="0 0 11 11" fill="none"><path d="M4.5 1.5H2A1 1 0 0 0 1 2.5V9a1 1 0 0 0 1 1h6.5a1 1 0 0 0 1-1V6.5" stroke="#475467" stroke-width="1"/><path d="M6.5 0.8h3.7v3.7M10.2 0.8L5.5 5.5" stroke="#475467" stroke-width="1"/></svg></div>
<div class="a" style="left:351px;top:367.79999999999995px;width:34.5px;height:21px;background:#f9fafb;border:1px solid #e4e7ec;border-radius:11px"></div>
<div class="a " style="left:358.29999999999995px;top:370.00px;font-size:9.9px;line-height:13px;color:#344054;font-weight:400;-webkit-text-stroke:0.12px #344054">Draft</div>
<div class="a " style="left:449px;top:371.00px;font-size:9.5px;line-height:12px;color:#3b6ff5;font-weight:400;">0</div>
<div class="a " style="left:573.8px;top:371.00px;font-size:9.5px;line-height:12px;color:#3b6ff5;font-weight:400;">0</div>
<div class="a " style="left:698.5999999999999px;top:370.00px;font-size:9.7px;line-height:13px;color:#667085;font-weight:400;letter-spacing:0.05px">Jan 20 2026, 1:05 PM</div>
<div class="a " style="left:859px;top:370.00px;font-size:9.7px;line-height:13px;color:#667085;font-weight:400;letter-spacing:0.05px">Jan 20 2026, 1:05 PM</div>
<svg class="a" style="left:1039px;top:373.0px;" width="8" height="10" viewBox="0 0 8 10" fill="none"><path d="M2 1.3l3.7 3.7L2 8.7" stroke="#475467" stroke-width="1"/></svg>
<svg class="a" style="left:1102px;top:372.29999999999995px;" width="3" height="13" viewBox="0 0 3 13" fill="none"><circle cx="1.5" cy="1.7" r="1.3" fill="#1d2939"/><circle cx="1.5" cy="6.2" r="1.3" fill="#1d2939"/><circle cx="1.5" cy="10.7" r="1.3" fill="#1d2939"/></svg>
</div>
<div class="a" style="left:477px;top:677px;width:1150px;height:1px;background:#e4e7ec"></div>
<div class="a" style="left:1157.5px;top:688.5px;width:63px;height:26px;background:#fff;border:1px solid #eaecf0;border-radius:6px"></div>
<div class="a " style="left:1168px;top:694.00px;font-size:11.05px;line-height:14px;color:#98a2b3;font-weight:400;">Previous</div>
<div class="a" style="left:1231px;top:691.3px;width:21px;height:20.2px;background:#fff;border:1.5px solid #155eef;border-radius:3px"></div>
<div class="a " style="left:1238.5px;top:694.00px;font-size:11px;line-height:14px;color:#155eef;font-weight:400;">1</div>
<div class="a " style="left:1265.7px;top:694.00px;font-size:11px;line-height:14px;color:#1d2939;font-weight:400;">2</div>
<div class="a " style="left:1292.95px;top:694.00px;font-size:11px;line-height:14px;color:#1d2939;font-weight:400;">3</div>
<div class="a " style="left:1319.95px;top:694.00px;font-size:11px;line-height:14px;color:#1d2939;font-weight:400;">4</div>
<div class="a " style="left:1346.95px;top:694.00px;font-size:11px;line-height:14px;color:#1d2939;font-weight:400;">5</div>
<div class="a " style="left:1374.15px;top:694.00px;font-size:11px;line-height:14px;color:#1d2939;font-weight:400;">6</div>
<div class="a " style="left:1400.75px;top:694.00px;font-size:11px;line-height:14px;color:#1d2939;font-weight:400;">7</div>
<div class="a " style="left:1451.8000000000002px;top:694.00px;font-size:11px;line-height:14px;color:#1d2939;font-weight:400;">14</div>
<div class="a " style="left:1426.5px;top:694.00px;font-size:9px;line-height:12px;color:#667085;font-weight:400;">...</div>
<div class="a" style="left:1478.3px;top:688.5px;width:44.3px;height:26px;background:#fff;border:1px solid #d0d5dd;border-radius:6px"></div>
<div class="a " style="left:1489px;top:694.00px;font-size:11.5px;line-height:15px;color:#1d2939;font-weight:400;">Next</div>
<div class="a" style="left:1533.3px;top:688.5px;width:75.5px;height:26px;background:#fff;border:1px solid #e4e7ec;border-radius:6px"></div>
<div class="a " style="left:1542px;top:694.00px;font-size:11.4px;line-height:15px;color:#344054;font-weight:400;">50 / page</div>
<svg class="a" style="left:1592px;top:697px;" width="9" height="6" viewBox="0 0 9 6" fill="none"><path d="M0.8 0.8L4.5 4.5 8.2 0.8" stroke="#98a2b3" stroke-width="1"/></svg>
<div class="a" style="left:1508.5px;top:250.5px;width:144px;height:210.5px;background:#fff;border-radius:4px;box-shadow:0 0 6px 2px rgba(16,24,40,.09),0 2px 4px rgba(16,24,40,.06)"></div>
<div class="a " style="left:1535.9px;top:259.00px;font-size:11.3px;line-height:15px;color:#475467;font-weight:400;">Edit workflow</div>
<div class="a " style="left:1535.9px;top:285.00px;font-size:11.3px;line-height:15px;color:#475467;font-weight:400;">Rename workflow</div>
<div class="a " style="left:1535.9px;top:310.00px;font-size:11.3px;line-height:15px;color:#475467;font-weight:400;">Open in new tab</div>
<div class="a " style="left:1535.9px;top:336.00px;font-size:11.3px;line-height:15px;color:#475467;font-weight:400;">Publish workflow</div>
<div class="a " style="left:1535.9px;top:361.00px;font-size:11.3px;line-height:15px;color:#475467;font-weight:400;">Move to folder</div>
<div class="a " style="left:1535.9px;top:387.00px;font-size:11.3px;line-height:15px;color:#475467;font-weight:400;">Duplicate workflow</div>
<div class="a " style="left:1535.9px;top:412.00px;font-size:11.3px;line-height:15px;color:#475467;font-weight:400;">Copy to sub-account</div>
<div class="a " style="left:1535.9px;top:438.00px;font-size:11.3px;line-height:15px;color:#475467;font-weight:400;">Delete workflow</div>
<svg class="a" style="left:1516px;top:261px;" width="12" height="12" viewBox="0 0 12 12" fill="none"><path d="M9.3 1.2l1.5 1.5L3.6 9.9 1.2 10.8l.9-2.4z" stroke="#475467" stroke-width="1.1" stroke-linecap="round" stroke-linejoin="round"/><path d="M8 2.5l1.5 1.5" stroke="#475467" stroke-width="1.1" stroke-linecap="round" stroke-linejoin="round"/></svg>
<svg class="a" style="left:1516px;top:286px;" width="12" height="12" viewBox="0 0 12 12" fill="none"><path d="M6.2 2.2H1.8a.8.8 0 0 0-.8.8v4a.8.8 0 0 0 .8.8h4.4" stroke="#475467" stroke-width="1.1" stroke-linecap="round" stroke-linejoin="round"/><path d="M8.3 1.2v8.6M7 1.2h2.6M7 9.8h2.6" stroke="#475467" stroke-width="1.1" stroke-linecap="round" stroke-linejoin="round"/><path d="M9.8 3c.8.2 1.2.6 1.2 1.5v1c0 .9-.4 1.3-1.2 1.5" stroke="#475467" stroke-width="1.1" stroke-linecap="round" stroke-linejoin="round"/></svg>
<svg class="a" style="left:1516px;top:312px;" width="12" height="12" viewBox="0 0 12 12" fill="none"><path d="M5 2H2.2A1.2 1.2 0 0 0 1 3.2v5.6A1.2 1.2 0 0 0 2.2 10h5.6A1.2 1.2 0 0 0 9 8.8V6" stroke="#475467" stroke-width="1.1" stroke-linecap="round" stroke-linejoin="round"/><path d="M7 1h3v3M10 1L5.5 5.5" stroke="#475467" stroke-width="1.1" stroke-linecap="round" stroke-linejoin="round"/></svg>
<svg class="a" style="left:1517px;top:337px;" width="12" height="12" viewBox="0 0 12 12" fill="none"><path d="M2 1.8v7.6c0 .5.5.8.9.5l5.8-3.8c.4-.3.4-.8 0-1.1L2.9 1.3c-.4-.3-.9 0-.9.5z" stroke="#475467" stroke-width="1.1" stroke-linecap="round" stroke-linejoin="round"/></svg>
<svg class="a" style="left:1516px;top:363px;" width="12" height="12" viewBox="0 0 12 12" fill="none"><path d="M1 2.2c0-.6.4-1 1-1h2.6l1.2 1.4h4.2c.6 0 1 .4 1 1v5.8c0 .6-.4 1-1 1H2c-.6 0-1-.4-1-1z" stroke="#475467" stroke-width="1.1" stroke-linecap="round" stroke-linejoin="round"/><path d="M1 4h10" stroke="#475467" stroke-width="1.1" stroke-linecap="round" stroke-linejoin="round"/><path d="M4.3 7l1.2 1.1 2.2-2" stroke="#475467" stroke-width="1.1" stroke-linecap="round" stroke-linejoin="round"/></svg>
<svg class="a" style="left:1516px;top:387px;" width="12" height="12" viewBox="0 0 12 12" fill="none"><rect x="1" y="4" width="6.5" height="6.5" rx="1.2" stroke="#475467" stroke-width="1.1" stroke-linecap="round" stroke-linejoin="round"/><path d="M4 1.2h1M6.5 1.2h1M9 1.2c.6 0 1 .4 1 1M10.2 4.2v1M10.2 6.7c0 .6-.4 1-1 1" stroke="#475467" stroke-width="1.1" stroke-linecap="round" stroke-linejoin="round"/></svg>
<svg class="a" style="left:1516px;top:413px;" width="12" height="12" viewBox="0 0 12 12" fill="none"><rect x="3.8" y="3.8" width="6.8" height="6.8" rx="1.3" stroke="#475467" stroke-width="1.1" stroke-linecap="round" stroke-linejoin="round"/><path d="M7.2 2.2v-.2A1 1 0 0 0 6.2 1H2A1 1 0 0 0 1 2v4.2a1 1 0 0 0 1 1h.2" stroke="#475467" stroke-width="1.1" stroke-linecap="round" stroke-linejoin="round"/></svg>
<svg class="a" style="left:1517px;top:439px;" width="12" height="12" viewBox="0 0 12 12" fill="none"><path d="M1 2.8h9M3.8 2.8V1.3h3.4v1.5M2 2.8l.6 6.6c.1.6.5 1 1.1 1h3.6c.6 0 1-.4 1.1-1L9 2.8" stroke="#475467" stroke-width="1.1" stroke-linecap="round" stroke-linejoin="round"/><path d="M4.5 5v3M6.5 5v3" stroke="#475467" stroke-width="1.1" stroke-linecap="round" stroke-linejoin="round"/></svg>
<div class="a" style="left:1494px;top:238px;width:172px;height:235px;border:8px solid #ff2b2b"></div>
</body></html>
